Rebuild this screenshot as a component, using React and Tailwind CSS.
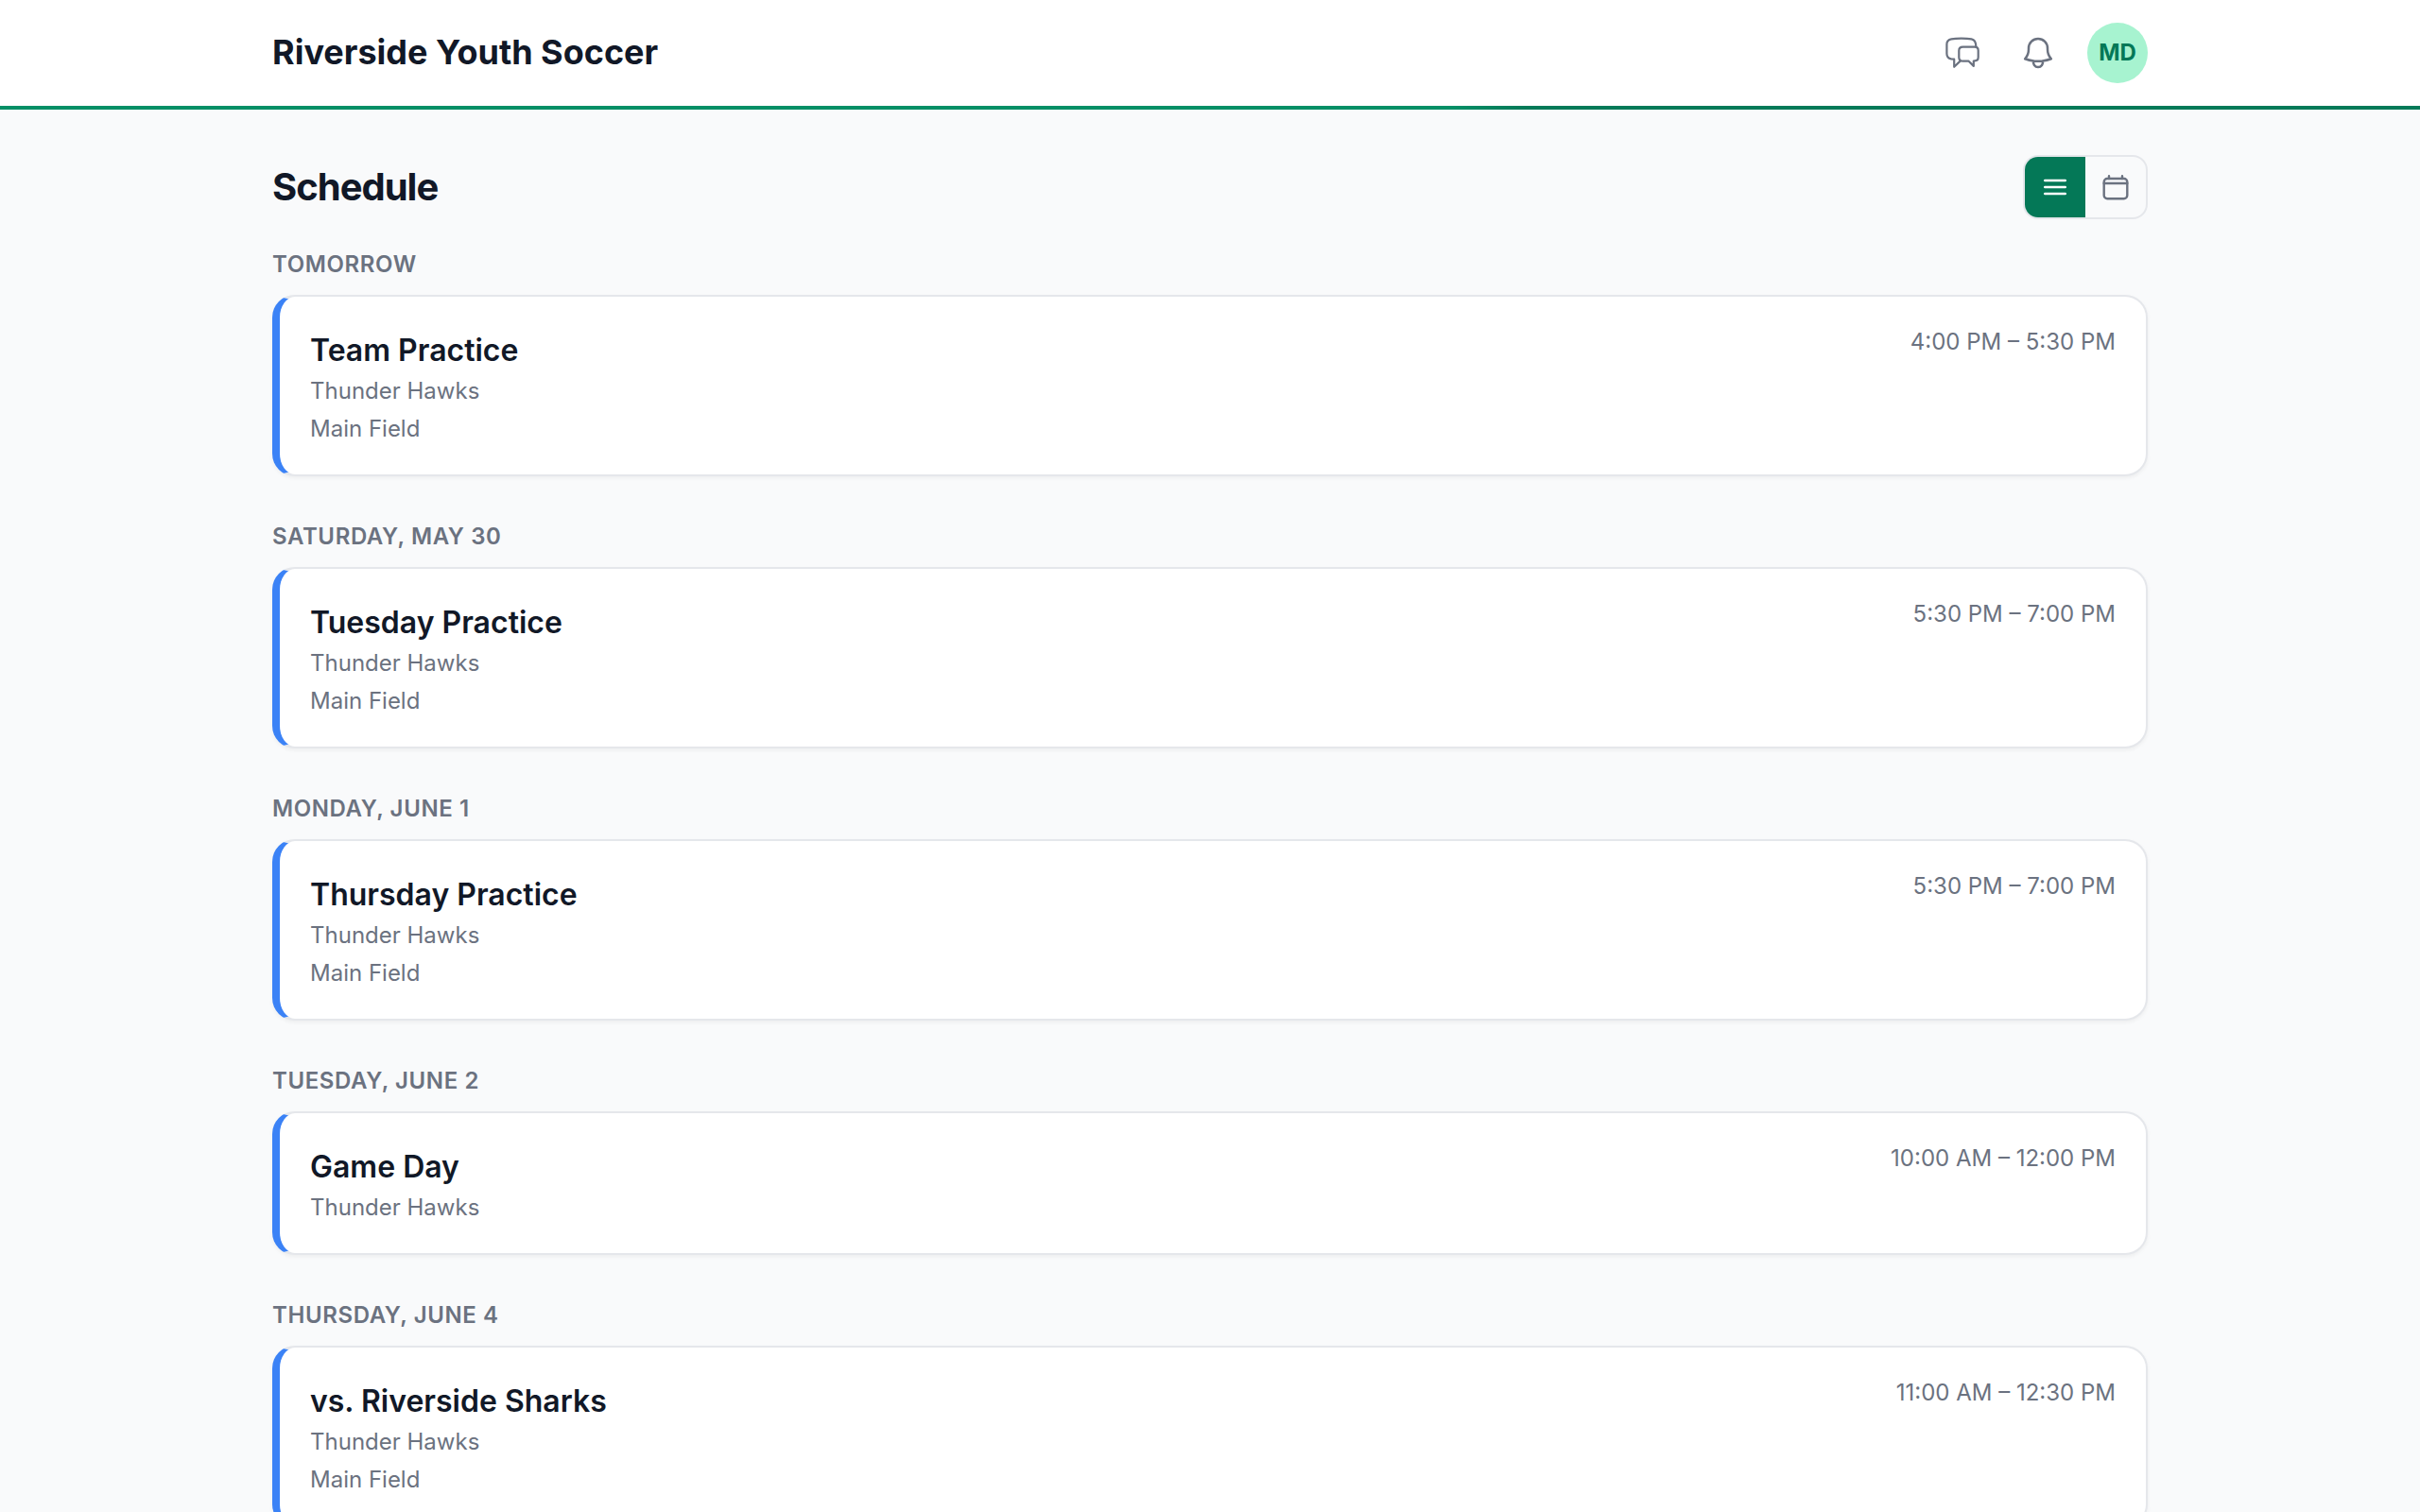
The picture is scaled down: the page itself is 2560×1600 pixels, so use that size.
import React from "react";

const events = [
  { day: "Tomorrow", title: "Team Practice", team: "Thunder Hawks", location: "Main Field", time: "4:00 PM – 5:30 PM" },
  { day: "Saturday, May 30", title: "Tuesday Practice", team: "Thunder Hawks", location: "Main Field", time: "5:30 PM – 7:00 PM" },
  { day: "Monday, June 1", title: "Thursday Practice", team: "Thunder Hawks", location: "Main Field", time: "5:30 PM – 7:00 PM" },
  { day: "Tuesday, June 2", title: "Game Day", team: "Thunder Hawks", time: "10:00 AM – 12:00 PM" },
  { day: "Thursday, June 4", title: "vs. Riverside Sharks", team: "Thunder Hawks", location: "Main Field", time: "11:00 AM – 12:30 PM" },
];

const ChatIcon = () => (
  <svg className="size-10" viewBox="0 0 40 40" fill="none" stroke="currentColor" strokeWidth="2.2" strokeLinecap="round" strokeLinejoin="round">
    <path d="M34.300 13.600C34.300 8.500 33.200 5.900 29.500 5.300C26 4.800 22.500 4.700 18.800 4.700S11.500 4.800 8.300 5.300C5.300 5.800 3.400 7.900 3.400 10.800V20.700C3.400 23.700 5.300 25.800 8.100 26.300L11.200 26.700V34.800L17.600 28.600" />
    <path d="M20.500 13.700H33C35.300 13.700 36.700 15.400 36.700 17.600V24.500C36.700 26.800 35.300 28.300 33.100 28.400L31.800 28.500V33.900L26.600 28.700H20.500C17.900 28.700 16.300 27.100 16.300 24.800V17.600C16.300 15.300 17.900 13.700 20.500 13.700Z" />
  </svg>
);

const BellIcon = () => (
  <svg className="size-10" viewBox="0 0 24 24" fill="none" stroke="currentColor" strokeWidth="1.5" strokeLinecap="round" strokeLinejoin="round">
    <path d="M14.857 17.082a23.848 23.848 0 0 0 5.454-1.310A8.967 8.967 0 0 1 18 9.750V9A6 6 0 0 0 6 9v.75a8.967 8.967 0 0 1-2.312 6.022c1.733.64 3.560 1.085 5.455 1.310m5.714 0a24.255 24.255 0 0 1-5.714 0m5.714 0a3 3 0 1 1-5.714 0" />
  </svg>
);

const EventCard = ({ event }) => {
  return (
    <div className="flex items-start justify-between rounded-[24px] border-2 border-l-8 border-[#e5e7eb] border-l-[#3b82f6] bg-white p-8 shadow-[0_2px_4px_rgba(0,0,0,0.05)]">
      <div>
        <h3 className="text-[32px] leading-[50px] font-semibold">{event.title}</h3>
        <p className="mt-0.5 text-2xl leading-8 text-[#6b7280]">{event.team}</p>
        {event.location && (
          <p className="mt-2 text-2xl leading-8 text-[#6b7280]">{event.location}</p>
        )}
      </div>
      <span className="text-2xl leading-8 text-[#6b7280]">{event.time}</span>
    </div>
  );
};

const App = () => {
  return (
    <div className="h-[1600px] overflow-hidden bg-[#f9fafb] font-['Inter',sans-serif] text-[#111827]">
      <header className="bg-white">
        <div className="mx-auto flex h-28 w-[1984px] items-center justify-between">
          <span className="pb-0.5 text-4xl font-bold">Riverside Youth Soccer</span>
          <div className="flex items-center gap-10 text-[#6b7280]">
            <ChatIcon />
            <BellIcon />
            <div className="-ml-2 flex size-16 items-center justify-center rounded-full bg-[#a7f3d0] text-2xl font-bold text-[#047857]">
              MD
            </div>
          </div>
        </div>
        <div className="h-1 bg-linear-to-r from-[#048f66] from-60% to-[#047a58] to-63%" />
      </header>
      <main className="mx-auto w-[1984px] pt-12">
        <div className="mb-8 flex items-center justify-between">
          <h1 className="text-[40px] leading-[60px] font-bold tracking-tight">Schedule</h1>
          <div className="flex overflow-hidden rounded-2xl border-2 border-[#e5e7eb] text-[#6b7280]">
            <button className="flex size-16 items-center justify-center bg-[#047857] text-white">
              <svg className="size-7" viewBox="0 0 28 28" fill="none" stroke="currentColor" strokeWidth="2.4" strokeLinecap="round">
                <path d="M3.200 7h21.600M3.200 14h21.600M3.200 21h21.600" />
              </svg>
            </button>
            <button className="flex size-16 items-center justify-center">
              <svg className="size-7" viewBox="0 0 28 28" fill="none" stroke="currentColor" strokeWidth="2.4" strokeLinecap="round" strokeLinejoin="round">
                <rect x="1.700" y="5" width="24.600" height="21.200" rx="3.500" />
                <path d="M1.700 10h24.600M7 2.300V5M21 2.300V5" />
              </svg>
            </button>
          </div>
        </div>
        <div className="flex flex-col gap-12">
          {events.map((event) => (
            <section key={event.day}>
              <h2 className="mb-4 text-2xl leading-8 font-semibold tracking-wide text-[#6b7280] uppercase">{event.day}</h2>
              <EventCard event={event} />
            </section>
          ))}
        </div>
      </main>
    </div>
  );
};

export default App;
